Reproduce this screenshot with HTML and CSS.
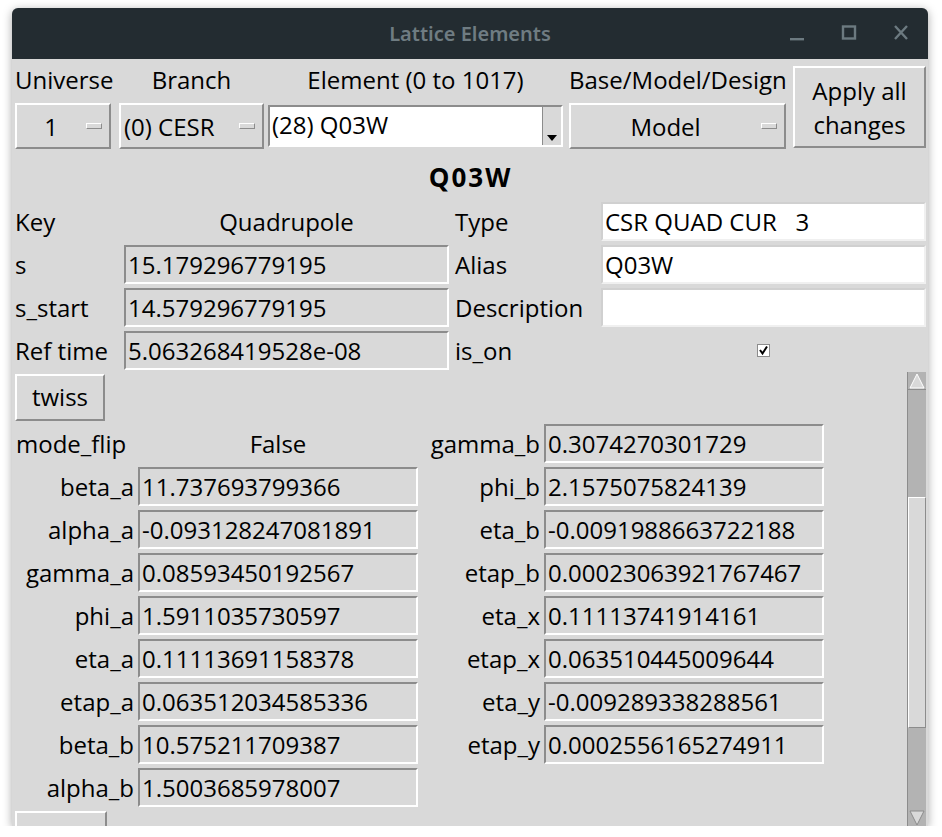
FILE: index.html
```html
<!DOCTYPE html>
<html>
<head>
<meta charset="utf-8">
<link rel="stylesheet" href="styles.css">
</head>
<body>
<div class="window">
  <div class="titlebar">
    <span class="title">Lattice Elements</span>
    <div class="controls">
      <svg width="20" height="20" viewBox="0 0 20 20"><rect x="3" y="15" width="14" height="2.4" fill="#6c7a80"/></svg>
      <svg width="20" height="20" viewBox="0 0 20 20"><rect x="4" y="3.5" width="12" height="12" fill="none" stroke="#6c7a80" stroke-width="2.4"/></svg>
      <svg width="20" height="20" viewBox="0 0 20 20"><path d="M4 3 L16 16 M16 3 L4 16" stroke="#6c7a80" stroke-width="2.4"/></svg>
    </div>
  </div>
  <div class="body">
    <div class="top">
      <div class="sel c1">
        <div class="lbl">Universe</div>
        <div class="mbtn"><span class="mtext">1</span><span class="ind"></span></div>
      </div>
      <div class="sel c2">
        <div class="lbl">Branch</div>
        <div class="mbtn"><span class="mtext left">(0) CESR</span><span class="ind"></span></div>
      </div>
      <div class="sel c3">
        <div class="lbl">Element (0 to 1017)</div>
        <div class="combo"><span class="ctext">(28) Q03W</span><span class="drop"><span class="tri"></span></span></div>
      </div>
      <div class="sel c4">
        <div class="lbl">Base/Model/Design</div>
        <div class="mbtn"><span class="mtext">Model</span><span class="ind"></span></div>
      </div>
      <div class="apply">Apply all<br>changes</div>
    </div>

    <div class="elname">Q03W</div>

    <div class="info">
      <div class="il">Key</div>
      <div class="iv plain">Quadrupole</div>
      <div class="il">Type</div>
      <div class="entry white">CSR QUAD CUR &nbsp;&nbsp;3</div>

      <div class="il">s</div>
      <div class="entry">15.179296779195</div>
      <div class="il">Alias</div>
      <div class="entry white">Q03W</div>

      <div class="il">s_start</div>
      <div class="entry">14.579296779195</div>
      <div class="il">Description</div>
      <div class="entry white"></div>

      <div class="il">Ref time</div>
      <div class="entry">5.063268419528e-08</div>
      <div class="il">is_on</div>
      <div class="iv plain"><span class="check">
        <svg width="11" height="11" viewBox="0 0 11 11"><path d="M2 5 L4.5 8.5 L9 1.5" fill="none" stroke="#000" stroke-width="2"/></svg>
      </span></div>
    </div>

    <div class="twiss-area">
      <div class="twiss-content">
        <div class="btn twiss">twiss</div>
        <div class="tgrid">
          <div class="tl left">mode_flip</div>
          <div class="tv plain">False</div>
          <div class="tl">gamma_b</div>
          <div class="entry">0.3074270301729</div>

          <div class="tl">beta_a</div>
          <div class="entry">11.737693799366</div>
          <div class="tl">phi_b</div>
          <div class="entry">2.1575075824139</div>

          <div class="tl">alpha_a</div>
          <div class="entry">-0.093128247081891</div>
          <div class="tl">eta_b</div>
          <div class="entry">-0.0091988663722188</div>

          <div class="tl">gamma_a</div>
          <div class="entry">0.08593450192567</div>
          <div class="tl">etap_b</div>
          <div class="entry">0.00023063921767467</div>

          <div class="tl">phi_a</div>
          <div class="entry">1.5911035730597</div>
          <div class="tl">eta_x</div>
          <div class="entry">0.11113741914161</div>

          <div class="tl">eta_a</div>
          <div class="entry">0.11113691158378</div>
          <div class="tl">etap_x</div>
          <div class="entry">0.063510445009644</div>

          <div class="tl">etap_a</div>
          <div class="entry">0.063512034585336</div>
          <div class="tl">eta_y</div>
          <div class="entry">-0.009289338288561</div>

          <div class="tl">beta_b</div>
          <div class="entry">10.575211709387</div>
          <div class="tl">etap_y</div>
          <div class="entry">0.0002556165274911</div>

          <div class="tl">alpha_b</div>
          <div class="entry">1.5003685978007</div>
          <div class="tl"></div>
          <div class="blank"></div>
        </div>
        <div class="btn partial"></div>
      </div>
      <div class="scrollbar">
        <div class="arrow up"><svg width="16" height="16" viewBox="0 0 16 16"><path d="M8 1 L15 15 L1 15 Z" fill="#d9d9d9" stroke="#fff" stroke-width="1"/></svg></div>
        <div class="trough t1"></div>
        <div class="thumb"></div>
        <div class="trough t2"></div>
        <div class="arrow down"><svg width="16" height="16" viewBox="0 0 16 16"><path d="M8 15 L15 1 L1 1 Z" fill="#d9d9d9" stroke="#8c8c8c" stroke-width="1"/></svg></div>
      </div>
    </div>
  </div>
</div>
</body>
</html>
```

FILE: styles.css
```css
html, body {
  margin: 0;
  padding: 0;
  background: #ffffff;
}
body {
  font-family: "Open Sans", "Lato", sans-serif;
  font-size: 24px;
  color: #000;
}
.window {
  margin: 8px 0 0 12px;
  width: 916px;
  height: 818px;
  background: #d9d9d9;
  border-radius: 6px 6px 0 0;
  box-shadow: 0 2px 10px rgba(0,0,0,0.35);
  overflow: hidden;
  display: flex;
  flex-direction: column;
}
.titlebar {
  height: 51px;
  background: #232c31;
  display: flex;
  align-items: center;
  justify-content: center;
  position: relative;
  flex: none;
}
.title {
  color: #6f7c82;
  font-family: "Noto Sans", sans-serif;
  font-size: 20px;
  font-weight: 600;
}
.controls {
  position: absolute;
  right: 17px;
  top: 15px;
  display: flex;
  gap: 32px;
}
.body {
  flex: 1;
  display: flex;
  flex-direction: column;
  padding: 6px 2px 0 3px;
  min-height: 0;
}
.top {
  display: flex;
  align-items: flex-start;
  height: 87px;
}
.sel {
  display: flex;
  flex-direction: column;
}
.lbl {
  height: 32px;
  line-height: 30px;
  text-align: center;
  white-space: nowrap;
}
.c1 { width: 96px; }
.c2 { width: 145px; margin-left: 8px; }
.c3 { width: 295px; margin-left: 4px; }
.c4 { width: 217px; margin-left: 6px; }
.c1 .lbl { text-align: left; }
.mbtn {
  margin-top: 6px;
  height: 46px;
  box-sizing: border-box;
  border: 2px solid;
  border-color: #ffffff #8c8c8c #8c8c8c #ffffff;
  display: flex;
  align-items: center;
  padding: 0 7px 0 3px;
}
.mtext {
  flex: 1;
  text-align: center;
  white-space: nowrap;
}
.mtext.left { text-align: left; }
.ind {
  width: 14px;
  height: 4px;
  border: 1px solid;
  border-color: #ffffff #8c8c8c #8c8c8c #ffffff;
  flex: none;
  margin-left: 4px;
}
.combo {
  margin-top: 8px;
  height: 42px;
  box-sizing: border-box;
  border: 2px solid;
  border-color: #8c8c8c #ffffff #ffffff #8c8c8c;
  background: #fff;
  display: flex;
}
.ctext {
  flex: 1;
  padding-left: 2px;
  line-height: 36px;
}
.drop {
  width: 18px;
  background: #d9d9d9;
  border-left: 1px solid #8c8c8c;
  display: flex;
  align-items: flex-end;
  justify-content: center;
  padding-bottom: 4px;
}
.tri {
  width: 0;
  height: 0;
  border-left: 5px solid transparent;
  border-right: 5px solid transparent;
  border-top: 6px solid #000;
}
.apply {
  margin-left: 7px;
  margin-top: 1px;
  width: 133px;
  height: 82px;
  box-sizing: border-box;
  border: 2px solid;
  border-color: #ffffff #8c8c8c #8c8c8c #ffffff;
  text-align: center;
  line-height: 34px;
  padding-top: 6px;
}
.elname {
  height: 50px;
  line-height: 50px;
  text-align: center;
  font-weight: bold;
  font-size: 26px;
  letter-spacing: 2px;
}
.info {
  display: grid;
  grid-template-columns: 109px 325px 152px 325px;
  grid-auto-rows: 39px;
  row-gap: 4px;
}
.il {
  line-height: 39px;
  white-space: nowrap;
}
.info .il:nth-child(4n+3) { padding-left: 6px; }
.iv {
  display: flex;
  align-items: center;
  justify-content: center;
}
.entry {
  box-sizing: border-box;
  border: 2px solid;
  border-color: #8c8c8c #ffffff #ffffff #8c8c8c;
  padding-left: 2px;
  line-height: 35px;
  white-space: nowrap;
  overflow: hidden;
}
.entry.white {
  background: #fff;
  border-color: #d0d0d0 #f0f0f0 #f0f0f0 #d0d0d0;
}
.check {
  width: 13px;
  height: 13px;
  box-sizing: border-box;
  background: #fff;
  border: 1px solid #8c8c8c;
  display: flex;
  align-items: center;
  justify-content: center;
}
.twiss-area {
  flex: 1;
  display: flex;
  margin-top: 2px;
  min-height: 0;
}
.twiss-content {
  flex: 1;
  display: flex;
  flex-direction: column;
  min-height: 0;
  overflow: hidden;
}
.btn {
  box-sizing: border-box;
  border: 2px solid;
  border-color: #ffffff #8c8c8c #8c8c8c #ffffff;
}
.twiss {
  width: 90px;
  height: 47px;
  margin-top: 2px;
  line-height: 42px;
  text-align: center;
  flex: none;
}
.tgrid {
  margin-top: 3px;
  display: grid;
  grid-template-columns: 123px 280px 126px 280px;
  grid-auto-rows: 39px;
  row-gap: 4px;
  flex: none;
}
.tl {
  text-align: right;
  padding-right: 4px;
  line-height: 39px;
  white-space: nowrap;
}
.tl.left { text-align: left; padding-right: 0; padding-left: 1px; }
.tv {
  display: flex;
  align-items: center;
  justify-content: center;
}
.partial {
  width: 92px;
  height: 40px;
  margin-top: 4px;
  flex: none;
}
.scrollbar {
  width: 18px;
  margin-right: 0;
  display: flex;
  flex-direction: column;
  background: #b3b3b3;
  border-left: 1px solid #8c8c8c;
  flex: none;
}
.arrow {
  height: 17px;
  display: flex;
  align-items: center;
  justify-content: center;
  flex: none;
}
.arrow.up { border-bottom: 1px solid #8c8c8c; }
.t1 { height: 107px; flex: none; }
.thumb {
  height: 231px;
  flex: none;
  box-sizing: border-box;
  background: #d9d9d9;
  border: 1px solid;
  border-color: #ffffff #8c8c8c #8c8c8c #ffffff;
}
.t2 { flex: 1; }
```
